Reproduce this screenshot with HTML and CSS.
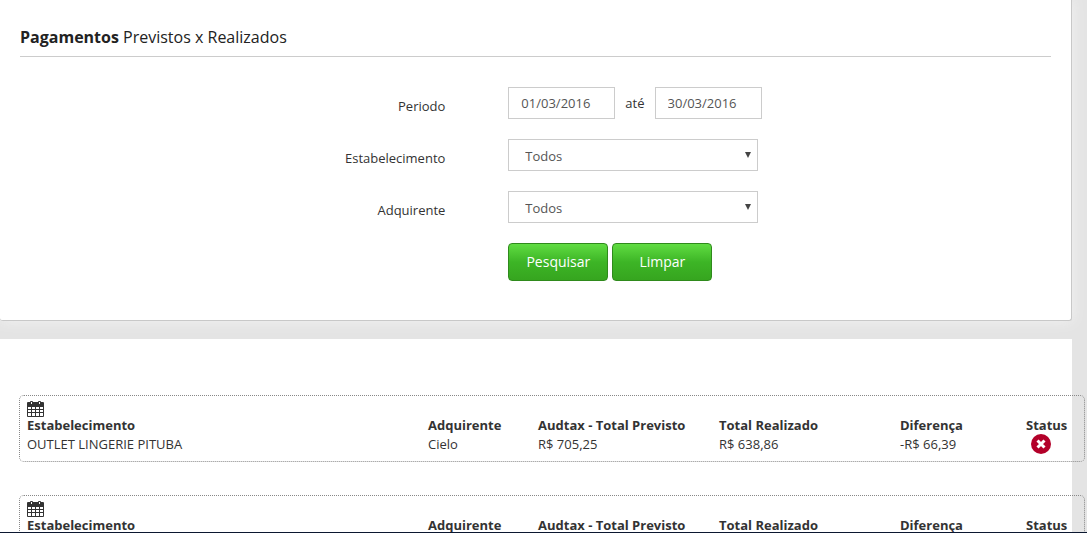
FILE: index.html
```html
<!DOCTYPE html>
<html lang="pt-BR">
<head>
<meta charset="utf-8">
<title>Pagamentos Previstos x Realizados</title>
<link rel="stylesheet" href="styles.css">
</head>
<body>
<svg class="sprite" aria-hidden="true">
  <symbol id="calendar" viewBox="0 0 17 16">
    <rect x="0" y="1" width="17" height="15" rx="1" fill="#333"/>
    <rect x="3" y="0" width="3" height="4" rx="1" fill="#333"/>
    <rect x="11" y="0" width="3" height="4" rx="1" fill="#333"/>
    <path d="M4 1h1v2H4zM12 1h1v2h-1z" fill="#fff"/>
    <path d="M1 6h3v2H1zM5 6h3v2H5zM9 6h3v2H9zM13 6h3v2h-3zM1 9h3v2H1zM5 9h3v2H5zM9 9h3v2H9zM13 9h3v2h-3zM1 12h3v3H1zM5 12h3v3H5zM9 12h3v3H9zM13 12h3v3h-3z" fill="#fff"/>
  </symbol>
  <symbol id="error" viewBox="0 0 20 20">
    <circle cx="10" cy="10" r="10" fill="#b30029"/>
    <path d="M6.5 6.5l7 7M13.500 6.500l-7 7" stroke="#fff" stroke-width="3"/>
  </symbol>
</svg>
<main class="page">
  <section class="panel filters">
    <h1 class="title"><strong>Pagamentos</strong> Previstos x Realizados</h1>
    <form class="form">
      <label class="label" for="start">Periodo</label>
      <div class="period">
        <input class="field date" id="start" type="text" value="01/03/2016">
        <label for="end">até</label>
        <input class="field date" id="end" type="text" value="30/03/2016">
      </div>
      <label class="label" for="store">Estabelecimento</label>
      <div class="picker"><select class="field select" id="store"><option>Todos</option></select></div>
      <label class="label" for="acquirer">Adquirente</label>
      <div class="picker"><select class="field select" id="acquirer"><option>Todos</option></select></div>
      <div class="actions">
        <button class="button" type="submit">Pesquisar</button>
        <button class="button" type="reset">Limpar</button>
      </div>
    </form>
  </section>
  <section class="panel results">
    <article class="entry">
      <svg class="calendar" role="img" aria-label="Data"><use href="#calendar"/></svg>
      <table class="table">
        <thead><tr><th class="store">Estabelecimento</th><th class="acquirer">Adquirente</th><th class="amount">Audtax - Total Previsto</th><th class="amount">Total Realizado</th><th class="difference">Diferença</th><th class="status">Status</th></tr></thead>
        <tbody><tr><td>OUTLET LINGERIE PITUBA</td><td>Cielo</td><td>R$ 705,25</td><td>R$ 638,86</td><td>-R$ 66,39</td><td><svg class="error" role="img" aria-label="Divergente"><use href="#error"/></svg></td></tr></tbody>
      </table>
    </article>
    <article class="entry">
      <svg class="calendar" role="img" aria-label="Data"><use href="#calendar"/></svg>
      <table class="table">
        <thead><tr><th class="store">Estabelecimento</th><th class="acquirer">Adquirente</th><th class="amount">Audtax - Total Previsto</th><th class="amount">Total Realizado</th><th class="difference">Diferença</th><th class="status">Status</th></tr></thead>
      </table>
    </article>
  </section>
</main>
</body>
</html>
```
FILE: styles.css
```css
* { box-sizing: border-box; }

body {
  margin: 0;
  background: #e4e4e4;
  color: #333;
  font: 13px/20px "Open Sans", "Noto Sans", sans-serif;
}

.sprite {
  position: absolute;
  width: 0;
  height: 0;
}

.page {
  height: 100vh;
  overflow: hidden;
  padding-right: 15px;
  border-bottom: 1px solid #0b1730;
}

.panel {
  padding: 0 20px;
  background: #fff;
}

.filters {
  margin-bottom: 18px;
  padding-top: 24px;
  padding-bottom: 39px;
  border: solid #c8c8c8;
  border-width: 0 1px 1px 0;
  border-radius: 0 0 3px 3px;
  box-shadow: 0 0 14px #f3f3f3;
}

.title {
  margin: 0 0 30px;
  padding-bottom: 6px;
  border-bottom: 1px solid #ccc;
  color: #222;
  font-size: 16px;
  font-weight: 400;
  line-height: 26px;
}

.title strong { font-weight: 700; }

.form {
  display: grid;
  grid-template-columns: 44fr 56fr;
  gap: 20px 62px;
}

.label {
  padding: 9px 1px 0 0;
  text-align: right;
}

.period {
  display: flex;
  align-items: center;
  gap: 10px;
}

.field {
  height: 32px;
  border: 1px solid #ccc;
  border-radius: 0;
  background: #fff;
  color: #555;
  font: inherit;
}

.date {
  width: 107px;
  padding: 0 12px;
}

.picker {
  position: relative;
  width: 250px;
}

.picker::after {
  content: "";
  position: absolute;
  top: 13px;
  right: 7px;
  border: solid transparent;
  border-width: 6px 3px 0;
  border-top-color: #444;
  pointer-events: none;
}

.select {
  display: block;
  width: 100%;
  padding: 2px 20px 0 16px;
  appearance: none;
}

.actions {
  display: flex;
  grid-column: 2;
  gap: 4px;
}

.button {
  width: 100px;
  height: 38px;
  padding: 0;
  border: 1px solid #2f8a1c;
  border-radius: 4px;
  background: linear-gradient(#60dc42, #3db526 50%, #36a51f);
  color: #fff;
  font: 14px/20px "Open Sans", "Noto Sans", sans-serif;
}

.results {
  padding: 56px 20px 40px 19px;
}

.entry {
  margin: 0 -33px 33px 0;
  padding: 5px 7px 6px;
  border: 1px dotted #888;
  border-radius: 5px;
}

.calendar {
  display: block;
  width: 17px;
  height: 16px;
}

.table {
  width: 100%;
  border-collapse: collapse;
  table-layout: fixed;
}

.table th,
.table td {
  padding: 0;
  text-align: left;
}

.table th {
  font-weight: 700;
  line-height: 16px;
}

.table td {
  height: 22px;
  line-height: 18px;
}

.table .acquirer { width: 110px; }

.table .amount { width: 181px; }

.table .difference { width: 126px; }

.table .status { width: 51px; }

.error {
  display: block;
  width: 20px;
  height: 20px;
  margin-left: 5px;
}
```
